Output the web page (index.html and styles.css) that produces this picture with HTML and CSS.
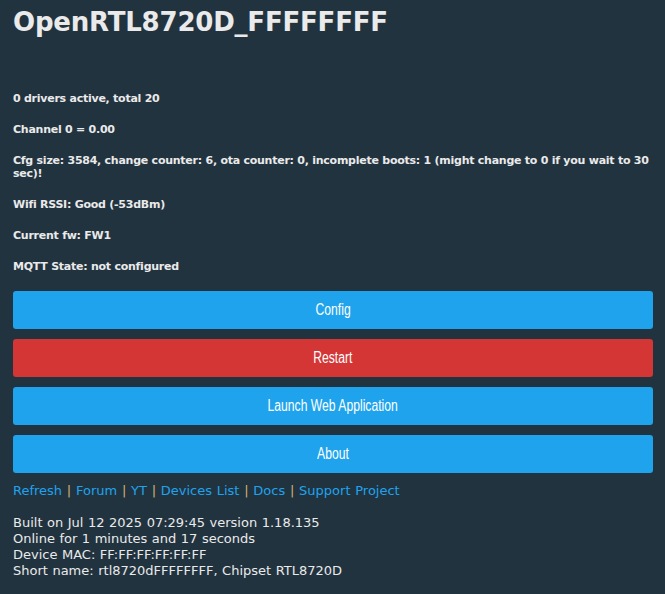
FILE: index.html
```html
<!DOCTYPE html>
<html>
<head>
	<title>OpenRTL8720D_FFFFFFFF</title>
	<link rel="stylesheet" href="styles.css">
</head>
<body>
	<div class = "page">
		<h1 class = "devName">OpenRTL8720D_FFFFFFFF</h1>

		<h5 class = "stat">0 drivers active, total 20</h5>
		<h5 class = "stat">Channel 0 = 0.00</h5>
		<h5 class = "stat">Cfg size: 3584, change counter: 6, ota counter: 0, incomplete boots: 1 (might change to 0 if you wait to 30 sec)!</h5>
		<h5 class = "stat">Wifi RSSI: Good (-53dBm)</h5>
		<h5 class = "stat">Current fw: FW1</h5>
		<h5 class = "stat">MQTT State: not configured</h5>

		<button class = "menuButton"><span class = "label">Config</span></button>
		<button class = "menuButton red"><span class = "label">Restart</span></button>
		<button class = "menuButton"><span class = "label">Launch Web Application</span></button>
		<button class = "menuButton"><span class = "label">About</span></button>

		<div class = "links">
			<a href = "#">Refresh</a> <span class = "sep">|</span>
			<a href = "#">Forum</a> <span class = "sep">|</span>
			<a href = "#">YT</a> <span class = "sep">|</span>
			<a href = "#">Devices List</a> <span class = "sep">|</span>
			<a href = "#">Docs</a> <span class = "sep">|</span>
			<a href = "#">Support Project</a>
		</div>

		<div class = "info">
			Built on Jul 12 2025 07:29:45 version 1.18.135<br>
			Online for 1 minutes and 17 seconds<br>
			Device MAC: FF:FF:FF:FF:FF:FF<br>
			Short name: rtl8720dFFFFFFFF, Chipset RTL8720D
		</div>
	</div>
</body>
</html>
```
FILE: styles.css
```css
body {
	margin : 0;
	background : #223340;
	color : #eaeaea;
	font-family : "DejaVu Sans", Verdana, sans-serif;
	font-size : 13px;
}
.page {
	padding : 0 12px 0 13px;
	display : flow-root;
}
.devName {
	font-size : 26px;
	font-weight : bold;
	line-height : 30px;
	letter-spacing : -0.2px;
	margin : 7px 0 55px 0;
}
.stat {
	font-size : 11px;
	font-weight : bold;
	line-height : 13px;
	letter-spacing : -0.25px;
	margin : 18px 0;
}
.menuButton {
	display : block;
	width : 100%;
	height : 38px;
	margin : 10px 0;
	padding : 0;
	border : 0;
	border-radius : 3px;
	background : #1fa3ec;
	color : #ffffff;
	font-family : "Liberation Sans", Arial, sans-serif;
	font-size : 16px;
	cursor : pointer;
}
.label {
	display : inline-block;
	transform : scaleX(0.76);
}
.red {
	background : #d43535;
}
.links {
	line-height : 16px;
	margin-top : 10px;
	word-spacing : 0.6px;
}
.links a {
	color : #1fa3ec;
	text-decoration : none;
}
.sep {
	color : #d4b072;
}
.info {
	margin-top : 16px;
	line-height : 16px;
	word-spacing : 0.4px;
}
```
